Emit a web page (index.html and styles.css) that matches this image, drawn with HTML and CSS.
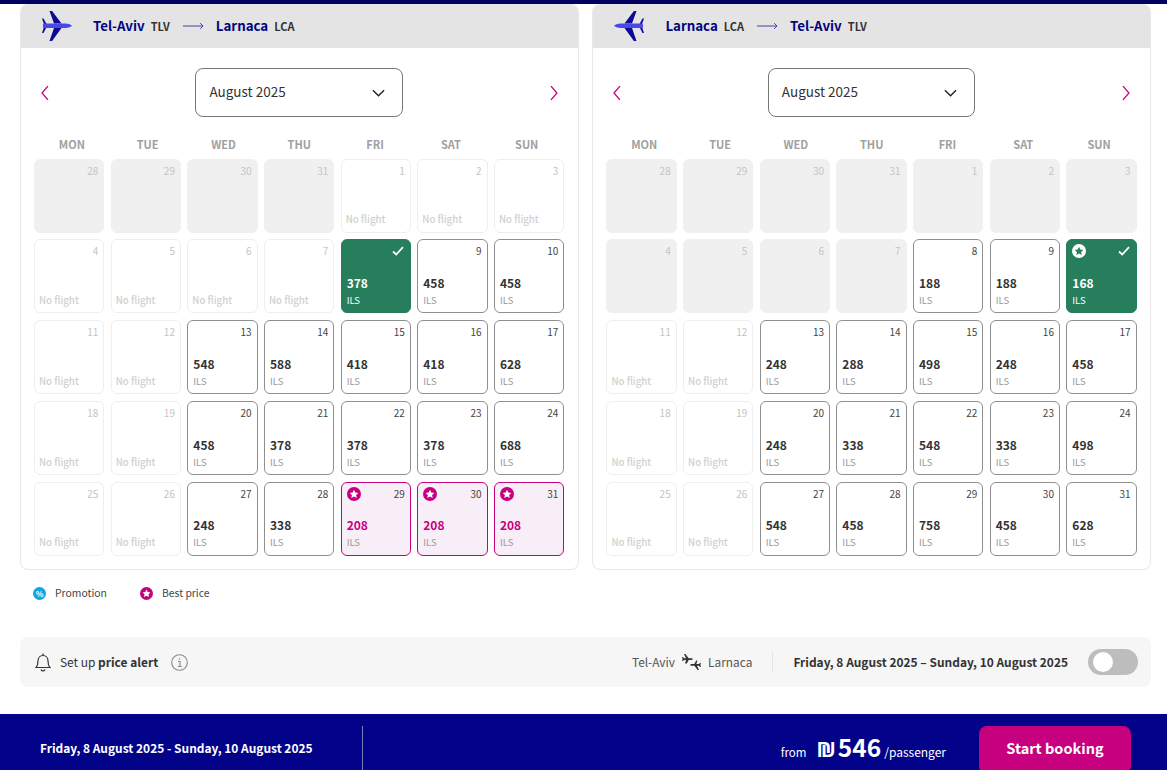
FILE: index.html
```html
<!doctype html>
<html lang="en">
<head>
	<meta charset="UTF-8">
	<title>Select dates</title>
	<link rel="stylesheet" href="styles.css">
</head>
<body>
	<svg class="sprite" xmlns="http://www.w3.org/2000/svg">
		<symbol id="plane" viewBox="0 0 30 30">
			<path fill="#0a0a96" d="M7.5 0h2.6L19.5 12.5h-7.5zM12 17h7.5L10.100 30H7.500z"/>
			<path fill="#0a0a96" d="M0 7.500h1.500L4.500 13H2zM2 16h2.500L1.500 22H0z"/>
			<path fill="#4848e6" d="M1.500 12.500h22c3 0 5.500 1.200 6.500 2.200-1 1-3.500 2.300-6.500 2.300h-22c-.8-.6-.8-3.900 0-4.500z"/>
		</symbol>
		<symbol id="star" viewBox="0 0 14 14">
			<circle cx="7" cy="7" r="7" fill="currentColor"/>
			<path class="star-mark" d="M7 2.800l1.300 2.700 3 .4-2.200 2 .6 3L7 9.400l-2.700 1.500.6-3-2.200-2 3-.4z"/>
		</symbol>
		<symbol id="check" viewBox="0 0 12 10">
			<path fill="none" stroke="#fff" stroke-width="1.800" d="M1 5.500l3.200 3L11 1.200"/>
		</symbol>
	</svg>

	<div class="topbar"></div>

	<main class="page">
		<div class="panels">
			<section class="panel">
				<header class="route">
					<svg class="route-plane"><use href="#plane"/></svg>
					<b class="city">Tel-Aviv</b><span class="code">TLV</span>
					<svg class="route-arrow" viewBox="0 0 22 8"><path fill="none" stroke="#3c3c96" d="M0 4h21M18 1l3 3-3 3"/></svg>
					<b class="city">Larnaca</b><span class="code">LCA</span>
				</header>
				<div class="nav">
					<svg class="chev" viewBox="0 0 8 16"><path d="M7 1L1 8l6 7"/></svg>
					<div class="month">
						<span>August 2025</span>
						<svg class="month-caret" viewBox="0 0 14 8"><path d="M1 1l6 6 6-6"/></svg>
					</div>
					<svg class="chev" viewBox="0 0 8 16"><path d="M1 1l6 7-6 7"/></svg>
				</div>
				<div class="weekdays">
					<span>MON</span><span>TUE</span><span>WED</span><span>THU</span><span>FRI</span><span>SAT</span><span>SUN</span>
				</div>
				<div class="days">
					<div class="day off"><div class="day-top"><span class="num">28</span></div></div>
					<div class="day off"><div class="day-top"><span class="num">29</span></div></div>
					<div class="day off"><div class="day-top"><span class="num">30</span></div></div>
					<div class="day off"><div class="day-top"><span class="num">31</span></div></div>
					<div class="day none"><div class="day-top"><span class="num">1</span></div><span class="noflight">No flight</span></div>
					<div class="day none"><div class="day-top"><span class="num">2</span></div><span class="noflight">No flight</span></div>
					<div class="day none"><div class="day-top"><span class="num">3</span></div><span class="noflight">No flight</span></div>

					<div class="day none"><div class="day-top"><span class="num">4</span></div><span class="noflight">No flight</span></div>
					<div class="day none"><div class="day-top"><span class="num">5</span></div><span class="noflight">No flight</span></div>
					<div class="day none"><div class="day-top"><span class="num">6</span></div><span class="noflight">No flight</span></div>
					<div class="day none"><div class="day-top"><span class="num">7</span></div><span class="noflight">No flight</span></div>
					<div class="day picked"><div class="day-top"><svg class="tick"><use href="#check"/></svg></div><b class="price">378</b><span class="cur">ILS</span></div>
					<div class="day"><div class="day-top"><span class="num">9</span></div><b class="price">458</b><span class="cur">ILS</span></div>
					<div class="day"><div class="day-top"><span class="num">10</span></div><b class="price">458</b><span class="cur">ILS</span></div>

					<div class="day none"><div class="day-top"><span class="num">11</span></div><span class="noflight">No flight</span></div>
					<div class="day none"><div class="day-top"><span class="num">12</span></div><span class="noflight">No flight</span></div>
					<div class="day"><div class="day-top"><span class="num">13</span></div><b class="price">548</b><span class="cur">ILS</span></div>
					<div class="day"><div class="day-top"><span class="num">14</span></div><b class="price">588</b><span class="cur">ILS</span></div>
					<div class="day"><div class="day-top"><span class="num">15</span></div><b class="price">418</b><span class="cur">ILS</span></div>
					<div class="day"><div class="day-top"><span class="num">16</span></div><b class="price">418</b><span class="cur">ILS</span></div>
					<div class="day"><div class="day-top"><span class="num">17</span></div><b class="price">628</b><span class="cur">ILS</span></div>

					<div class="day none"><div class="day-top"><span class="num">18</span></div><span class="noflight">No flight</span></div>
					<div class="day none"><div class="day-top"><span class="num">19</span></div><span class="noflight">No flight</span></div>
					<div class="day"><div class="day-top"><span class="num">20</span></div><b class="price">458</b><span class="cur">ILS</span></div>
					<div class="day"><div class="day-top"><span class="num">21</span></div><b class="price">378</b><span class="cur">ILS</span></div>
					<div class="day"><div class="day-top"><span class="num">22</span></div><b class="price">378</b><span class="cur">ILS</span></div>
					<div class="day"><div class="day-top"><span class="num">23</span></div><b class="price">378</b><span class="cur">ILS</span></div>
					<div class="day"><div class="day-top"><span class="num">24</span></div><b class="price">688</b><span class="cur">ILS</span></div>

					<div class="day none"><div class="day-top"><span class="num">25</span></div><span class="noflight">No flight</span></div>
					<div class="day none"><div class="day-top"><span class="num">26</span></div><span class="noflight">No flight</span></div>
					<div class="day"><div class="day-top"><span class="num">27</span></div><b class="price">248</b><span class="cur">ILS</span></div>
					<div class="day"><div class="day-top"><span class="num">28</span></div><b class="price">338</b><span class="cur">ILS</span></div>
					<div class="day best"><div class="day-top"><svg class="badge"><use href="#star"/></svg><span class="num">29</span></div><b class="price">208</b><span class="cur">ILS</span></div>
					<div class="day best"><div class="day-top"><svg class="badge"><use href="#star"/></svg><span class="num">30</span></div><b class="price">208</b><span class="cur">ILS</span></div>
					<div class="day best"><div class="day-top"><svg class="badge"><use href="#star"/></svg><span class="num">31</span></div><b class="price">208</b><span class="cur">ILS</span></div>
				</div>
			</section>

			<section class="panel">
				<header class="route">
					<svg class="route-plane flip"><use href="#plane"/></svg>
					<b class="city">Larnaca</b><span class="code">LCA</span>
					<svg class="route-arrow" viewBox="0 0 22 8"><path fill="none" stroke="#3c3c96" d="M0 4h21M18 1l3 3-3 3"/></svg>
					<b class="city">Tel-Aviv</b><span class="code">TLV</span>
				</header>
				<div class="nav">
					<svg class="chev" viewBox="0 0 8 16"><path d="M7 1L1 8l6 7"/></svg>
					<div class="month">
						<span>August 2025</span>
						<svg class="month-caret" viewBox="0 0 14 8"><path d="M1 1l6 6 6-6"/></svg>
					</div>
					<svg class="chev" viewBox="0 0 8 16"><path d="M1 1l6 7-6 7"/></svg>
				</div>
				<div class="weekdays">
					<span>MON</span><span>TUE</span><span>WED</span><span>THU</span><span>FRI</span><span>SAT</span><span>SUN</span>
				</div>
				<div class="days">
					<div class="day off"><div class="day-top"><span class="num">28</span></div></div>
					<div class="day off"><div class="day-top"><span class="num">29</span></div></div>
					<div class="day off"><div class="day-top"><span class="num">30</span></div></div>
					<div class="day off"><div class="day-top"><span class="num">31</span></div></div>
					<div class="day off"><div class="day-top"><span class="num">1</span></div></div>
					<div class="day off"><div class="day-top"><span class="num">2</span></div></div>
					<div class="day off"><div class="day-top"><span class="num">3</span></div></div>

					<div class="day off"><div class="day-top"><span class="num">4</span></div></div>
					<div class="day off"><div class="day-top"><span class="num">5</span></div></div>
					<div class="day off"><div class="day-top"><span class="num">6</span></div></div>
					<div class="day off"><div class="day-top"><span class="num">7</span></div></div>
					<div class="day"><div class="day-top"><span class="num">8</span></div><b class="price">188</b><span class="cur">ILS</span></div>
					<div class="day"><div class="day-top"><span class="num">9</span></div><b class="price">188</b><span class="cur">ILS</span></div>
					<div class="day picked"><div class="day-top"><svg class="badge"><use href="#star"/></svg><svg class="tick"><use href="#check"/></svg></div><b class="price">168</b><span class="cur">ILS</span></div>

					<div class="day none"><div class="day-top"><span class="num">11</span></div><span class="noflight">No flight</span></div>
					<div class="day none"><div class="day-top"><span class="num">12</span></div><span class="noflight">No flight</span></div>
					<div class="day"><div class="day-top"><span class="num">13</span></div><b class="price">248</b><span class="cur">ILS</span></div>
					<div class="day"><div class="day-top"><span class="num">14</span></div><b class="price">288</b><span class="cur">ILS</span></div>
					<div class="day"><div class="day-top"><span class="num">15</span></div><b class="price">498</b><span class="cur">ILS</span></div>
					<div class="day"><div class="day-top"><span class="num">16</span></div><b class="price">248</b><span class="cur">ILS</span></div>
					<div class="day"><div class="day-top"><span class="num">17</span></div><b class="price">458</b><span class="cur">ILS</span></div>

					<div class="day none"><div class="day-top"><span class="num">18</span></div><span class="noflight">No flight</span></div>
					<div class="day none"><div class="day-top"><span class="num">19</span></div><span class="noflight">No flight</span></div>
					<div class="day"><div class="day-top"><span class="num">20</span></div><b class="price">248</b><span class="cur">ILS</span></div>
					<div class="day"><div class="day-top"><span class="num">21</span></div><b class="price">338</b><span class="cur">ILS</span></div>
					<div class="day"><div class="day-top"><span class="num">22</span></div><b class="price">548</b><span class="cur">ILS</span></div>
					<div class="day"><div class="day-top"><span class="num">23</span></div><b class="price">338</b><span class="cur">ILS</span></div>
					<div class="day"><div class="day-top"><span class="num">24</span></div><b class="price">498</b><span class="cur">ILS</span></div>

					<div class="day none"><div class="day-top"><span class="num">25</span></div><span class="noflight">No flight</span></div>
					<div class="day none"><div class="day-top"><span class="num">26</span></div><span class="noflight">No flight</span></div>
					<div class="day"><div class="day-top"><span class="num">27</span></div><b class="price">548</b><span class="cur">ILS</span></div>
					<div class="day"><div class="day-top"><span class="num">28</span></div><b class="price">458</b><span class="cur">ILS</span></div>
					<div class="day"><div class="day-top"><span class="num">29</span></div><b class="price">758</b><span class="cur">ILS</span></div>
					<div class="day"><div class="day-top"><span class="num">30</span></div><b class="price">458</b><span class="cur">ILS</span></div>
					<div class="day"><div class="day-top"><span class="num">31</span></div><b class="price">628</b><span class="cur">ILS</span></div>
				</div>
			</section>
		</div>

		<div class="legend">
			<span class="legend-item"><span class="promo">%</span>Promotion</span>
			<span class="legend-item"><svg class="legend-star"><use href="#star"/></svg>Best price</span>
		</div>

		<div class="alert">
			<svg class="bell" viewBox="0 0 16 20"><path d="M1 15.500c1.500-1.500 2-3 2-6.500 0-3.200 2-5.500 5-5.500s5 2.300 5 5.500c0 3.500.5 5 2 6.500zM8 3.500V1.500M6 17.500c.4 1 1.100 1.500 2 1.500s1.600-.5 2-1.500"/></svg>
			<span class="alert-text">Set up <b>price alert</b></span>
			<svg class="info" viewBox="0 0 17 17"><circle cx="8.500" cy="8.500" r="7.800"/><path d="M7 7.500h2v5M6.800 12.500h4M8.500 4.300v1.400"/></svg>
			<div class="alert-route">
				<span>Tel-Aviv</span>
				<svg class="pair" viewBox="0 0 20 17"><path d="M2 0h1.500l3.500 4.500h3c.8 0 1.300.4 1.300.9s-.5.900-1.300.9h-3l-2 3.700H3.200l1-3.700H2L1 7.500H0l.5-2.100L0 3.300h1l1 1.200h2.200z"/><path d="M18 17h-1.500L13 12.500h-3c-.8 0-1.300-.4-1.300-.9s.5-.9 1.300-.9h3l2-3.700h1.200l-1 3.700H18l1-1.200h1l-.5 2.100.5 2.100h-1l-1-1.200h-2.200z"/></svg>
				<span>Larnaca</span>
			</div>
			<b class="alert-dates">Friday, 8 August 2025 – Sunday, 10 August 2025</b>
			<div class="toggle"><span class="knob"></span></div>
		</div>
	</main>

	<footer class="footer">
		<b class="footer-dates">Friday, 8 August 2025 - Sunday, 10 August 2025</b>
		<div class="footer-price">
			<span class="from">from</span>
			<b class="shekel">₪</b><b class="amount">546</b>
			<span class="per">/passenger</span>
		</div>
		<a class="book">Start booking</a>
	</footer>
</body>
</html>
```

FILE: styles.css
```css
*{
	margin: 0;
	padding: 0;
	box-sizing: border-box;
}
html,body{
	height: 770px;
	overflow: hidden;
}
body{
	background: #fff;
	color: #333;
	font-family: "Noto Sans CJK SC", "Noto Sans", sans-serif;
	font-size: 12px;
	line-height: 1.3;
}
.sprite{
	display: none;
}
.star-mark{
	fill: var(--star-fill, #fff);
}
.topbar{
	height: 4px;
	background: #000060;
}
.page{
	padding: 0 16px 0 20px;
}
.panels{
	display: flex;
	gap: 13.800px;
}
.panel{
	width: 558.600px;
	height: 566px;
	border: 1px solid #e8e8e8;
	border-top: 0;
	border-radius: 8px;
	overflow: hidden;
}
.route{
	height: 44px;
	margin: 0 -1px;
	padding-left: 22px;
	background: #e4e4e5;
	display: flex;
	align-items: center;
	color: #03037f;
}
.route-plane{
	width: 30px;
	height: 30px;
	margin-right: 21px;
}
.flip{
	transform: scaleX(-1);
}
.city{
	font-size: 13.300px;
}
.code{
	font-size: 11px;
	font-weight: 600;
	color: #333;
	margin-left: 6px;
}
.route-arrow{
	width: 21px;
	height: 8px;
	margin: 0 12px 0 13px;
}
.nav{
	margin-top: 20px;
	padding: 0 20px;
	height: 49px;
	display: flex;
	align-items: center;
}
.chev{
	width: 8px;
	height: 16px;
	fill: none;
	stroke: #c6007e;
	stroke-width: 1.3;
}
.month{
	width: 208.500px;
	height: 49px;
	margin: 0 147px 0 146.500px;
	border: 1px solid #777;
	border-radius: 8px;
	padding: 0 17px 2px 13px;
	display: flex;
	align-items: center;
	justify-content: space-between;
	font-size: 13.500px;
}
.month-caret{
	width: 13px;
	height: 8px;
	margin-top: 2px;
	fill: none;
	stroke: #222;
	stroke-width: 1.5;
}
.weekdays{
	display: grid;
	grid-template-columns: repeat(7, 1fr);
	padding: 12px 13px 0;
	height: 41.700px;
	align-items: center;
	text-align: center;
	font-size: 11px;
	font-weight: 700;
	color: #a0a0a0;
}
.days{
	display: grid;
	grid-template-columns: repeat(7, 70.300px);
	grid-auto-rows: 74px;
	column-gap: 6.370px;
	row-gap: 6.750px;
	padding: 0 13px;
}
.day{
	border: 1px solid #8f8f8f;
	border-radius: 6px;
	padding: 4px 5px 5.300px 5px;
	display: flex;
	flex-direction: column;
}
.day-top{
	display: flex;
	align-items: flex-start;
	height: 16px;
}
.num{
	margin-left: auto;
	font-size: 10px;
	line-height: 14px;
	color: #444;
}
.price{
	margin-top: auto;
	font-size: 12px;
	line-height: 18px;
	color: #333;
}
.cur{
	font-size: 9.500px;
	line-height: 14px;
	color: #999;
	margin-top: 1px;
}
.off{
	background: #f0f0f0;
	border-color: #f0f0f0;
}
.off .num,.none .num{
	color: #c4c4c4;
}
.none{
	border-color: #eeeeee;
}
.noflight{
	margin: auto 0 0 -1px;
	font-size: 9.700px;
	font-weight: 500;
	line-height: 14px;
	color: #d0d0d0;
}
.picked{
	background: #277e5c;
	border-color: #277e5c;
}
.picked .price,.picked .cur{
	color: #fff;
}
.picked .badge{
	color: #fff;
	--star-fill: #277e5c;
}
.tick{
	margin-left: auto;
	width: 12px;
	height: 10px;
	margin-top: 2px;
	margin-right: 1px;
}
.badge{
	width: 14px;
	height: 14px;
	color: #c6007e;
}
.best{
	background: #f8eef7;
	border-color: #c6007e;
}
.best .price{
	color: #c6007e;
}
.legend{
	display: flex;
	gap: 33px;
	padding: 16px 0 0 13px;
	height: 67px;
	font-size: 10.400px;
	color: #444;
}
.legend-item{
	display: flex;
	gap: 9px;
	height: 14px;
	align-items: center;
}
.promo{
	width: 13px;
	height: 13px;
	border-radius: 50%;
	background: #0ca6e2;
	color: #fff;
	font-size: 8px;
	font-weight: 700;
	line-height: 13px;
	text-align: center;
}
.legend-star{
	width: 13px;
	height: 13px;
	color: #c6007e;
}
.alert{
	height: 50px;
	border-radius: 8px;
	background: #f6f6f6;
	padding: 0 13px 0 15px;
	display: flex;
	align-items: center;
}
.bell{
	width: 16px;
	height: 20px;
	fill: none;
	stroke: #333;
	stroke-width: 1.2;
	margin-right: 9px;
}
.alert-text{
	font-size: 11.950px;
}
.info{
	width: 17px;
	height: 17px;
	margin-left: 13px;
	fill: none;
	stroke: #8a8a8a;
	stroke-width: 1.1;
}
.alert-route{
	margin-left: auto;
	display: flex;
	align-items: center;
	gap: 7px;
	height: 20px;
	padding-right: 20px;
	border-right: 1px solid #e4e4e4;
	font-size: 11.900px;
	color: #555;
}
.pair{
	width: 19px;
	height: 16px;
	fill: #333;
}
.alert-dates{
	margin-left: 20px;
	font-size: 11.950px;
	color: #333;
}
.toggle{
	margin-left: 20px;
	width: 50px;
	height: 26px;
	border-radius: 13px;
	background: #bdbdbd;
	padding: 3px 5px;
}
.knob{
	display: block;
	width: 20px;
	height: 20px;
	border-radius: 50%;
	background: #fff;
}
.footer{
	margin-top: 27px;
	height: 72px;
	background: #03038a;
	color: #fff;
	display: flex;
	align-items: center;
	padding: 0 36px 0 40px;
}
.footer-dates{
	width: 323px;
	height: 48px;
	line-height: 44px;
	border-right: 1px solid #7c7cb8;
	font-size: 11.950px;
}
.footer-price{
	margin-left: auto;
	display: flex;
	align-items: baseline;
	margin-top: -7px;
}
.from{
	font-size: 11.500px;
	margin-right: 10px;
}
.shekel{
	font-size: 21px;
	margin-right: 2px;
}
.amount{
	font-size: 24.500px;
	line-height: 32px;
}
.per{
	font-size: 12px;
	margin-left: 3px;
}
.book{
	margin-left: 33px;
	width: 152px;
	height: 48px;
	border-radius: 8px;
	background: #c6007e;
	text-align: center;
	font-size: 14.500px;
	font-weight: 700;
	line-height: 44px;
}
```
